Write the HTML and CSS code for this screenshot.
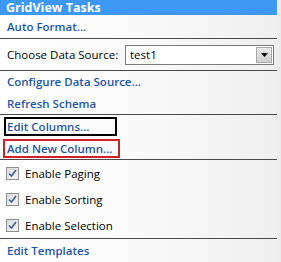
FILE: index.html
```html
<!DOCTYPE html>
<html lang="en">
<head>
    <meta charset="UTF-8">
    <meta name="viewport" content="width=device-width, initial-scale=1.0">
    <title>GridView Tasks</title>
    <link rel="stylesheet" href="styles.css">
</head>
<body>
    <div class="panel">
        <div class="panel-header">GridView Tasks</div>

        <div class="row row-format sep">
            <a class="task" href="#">Auto Format...</a>
        </div>

        <div class="row row-source sep">
            <span class="label">Choose Data Source:</span>
            <div class="select">
                <span class="select-value">test1</span>
                <span class="select-arrow">
                    <svg width="7" height="4" viewBox="0 0 7 4"><path d="M0 0h7L3.5 4z" fill="#000"/></svg>
                </span>
            </div>
        </div>

        <div class="row row-configure">
            <a class="task" href="#">Configure Data Source...</a>
        </div>
        <div class="row row-refresh sep">
            <a class="task" href="#">Refresh Schema</a>
        </div>

        <div class="row row-edit">
            <a class="task boxed-black" href="#">Edit Columns...</a>
        </div>
        <div class="row row-add sep">
            <a class="task boxed-red" href="#">Add New Column...</a>
        </div>

        <label class="row check-row row-paging">
            <span class="check"><svg width="9" height="9" viewBox="0 0 9 9"><path d="M1 4.5l2.5 2.5L8 1" fill="none" stroke="#3d5f9a" stroke-width="1.6"/></svg></span>
            Enable Paging
        </label>
        <label class="row check-row row-sorting">
            <span class="check"><svg width="9" height="9" viewBox="0 0 9 9"><path d="M1 4.5l2.5 2.5L8 1" fill="none" stroke="#3d5f9a" stroke-width="1.6"/></svg></span>
            Enable Sorting
        </label>
        <label class="row check-row row-selection sep">
            <span class="check"><svg width="9" height="9" viewBox="0 0 9 9"><path d="M1 4.5l2.5 2.5L8 1" fill="none" stroke="#3d5f9a" stroke-width="1.6"/></svg></span>
            Enable Selection
        </label>

        <div class="row row-templates">
            <a class="task" href="#">Edit Templates</a>
        </div>
    </div>
</body>
</html>
```

FILE: styles.css
```css
body {
    margin: 0;
    padding: 0;
    background-color: #ececec;
    font-family: "Open Sans", "Noto Sans", sans-serif;
    font-size: 11.5px;
    color: #000;
}

.panel {
    width: 277px;
    height: 262px;
    display: flex;
    flex-direction: column;
    background: linear-gradient(to right, #ffffff 0%, #f8f8f8 60%, #efefef 100%);
}

.panel-header {
    height: 15px;
    line-height: 15px;
    padding-left: 6px;
    background-color: #3d98f4;
    color: #fff;
    font-size: 12.5px;
    font-weight: bold;
    overflow: hidden;
}

.row {
    display: flex;
    align-items: center;
    padding-left: 7px;
    box-sizing: border-box;
}

.sep {
    border-bottom: 1px solid #4a4a4a;
}

.task {
    color: #1f56a8;
    text-decoration: none;
    font-weight: 600;
}

.row-format { height: 24px; }
.row-source { height: 32px; }
.row-configure { height: 21px; }
.row-refresh { height: 23px; }
.row-edit { height: 23px; }
.row-add { height: 22px; }
.row-paging { height: 26px; }
.row-sorting { height: 26px; }
.row-selection { height: 27px; }
.row-templates { height: 23px; }

.boxed-black {
    border: 2px solid #000;
    margin-left: -3px;
    padding: 0 26px 0 1px;
}

.boxed-red {
    border: 2px solid #d0202a;
    margin-left: -4px;
    padding: 0 6px 0 2px;
}

.row-source .label {
    width: 118px;
}

.select {
    width: 149px;
    height: 20px;
    box-sizing: border-box;
    border: 1px solid #7a7a7a;
    background: #fff;
    display: flex;
    align-items: center;
    justify-content: space-between;
    padding: 0 1px 0 4px;
}

.select-arrow {
    width: 16px;
    height: 16px;
    box-sizing: border-box;
    border: 1px solid #a8a8a8;
    background: linear-gradient(#e8e8e8, #cfcfcf);
    display: flex;
    align-items: center;
    justify-content: center;
}

.check-row {
    padding-left: 6px;
    gap: 6px;
}

.check {
    width: 13px;
    height: 13px;
    box-sizing: border-box;
    border: 1px solid #8e8f8f;
    background: linear-gradient(135deg, #dcdcdc, #f6f6f6);
    display: flex;
    align-items: center;
    justify-content: center;
}
```
